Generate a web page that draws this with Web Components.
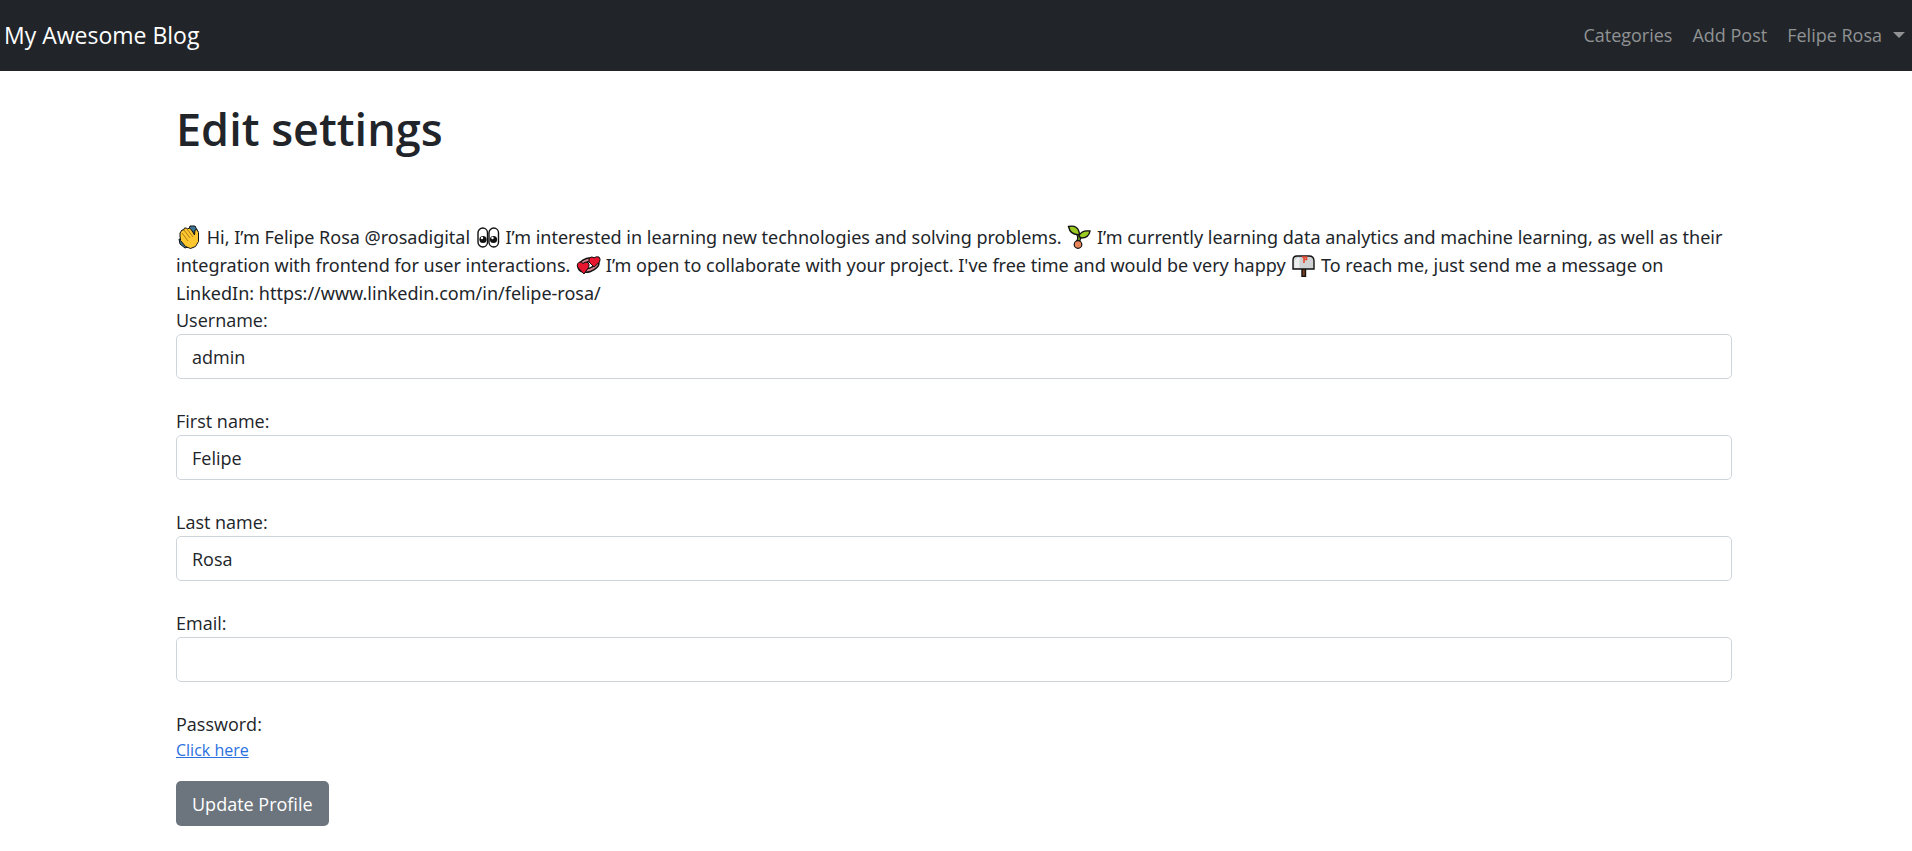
<!DOCTYPE html>
<html lang="en">
<head>
<meta charset="utf-8">
<title>My Awesome Blog</title>
<style>
  body { margin: 0; background: #fff; color: #212529; font: 18px/28px "Open Sans", "Noto Sans", sans-serif; }
</style>
</head>
<body>
<blog-navbar brand="My Awesome Blog">
  <blog-nav-link href="#categories">Categories</blog-nav-link>
  <blog-nav-link href="#add-post">Add Post</blog-nav-link>
  <blog-nav-link href="#profile" dropdown>Felipe Rosa</blog-nav-link>
</blog-navbar>
<settings-page heading="Edit settings">
  <profile-bio slot="bio"><emoji-icon name="wave"></emoji-icon> Hi, I’m Felipe Rosa @rosadigital <emoji-icon name="eyes"></emoji-icon> I’m interested in learning new technologies and solving problems. <emoji-icon name="seedling"></emoji-icon> I’m currently learning data analytics and machine learning, as well as their integration with frontend for user interactions. <emoji-icon name="hearts"></emoji-icon> I’m open to collaborate with your project. I've free time and would be very happy <emoji-icon name="mailbox"></emoji-icon> To reach me, just send me a message on LinkedIn: https://www.linkedin.com/in/felipe-rosa/</profile-bio>
  <text-field label="Username:" value="admin"></text-field>
  <text-field label="First name:" value="Felipe"></text-field>
  <text-field label="Last name:" value="Rosa"></text-field>
  <text-field label="Email:" type="email"></text-field>
  <password-row label="Password:" href="#password">Click here</password-row>
  <submit-button slot="actions">Update Profile</submit-button>
</settings-page>

<script>
const define = (name, html, setup) => customElements.define(name, class extends HTMLElement {
  constructor() {
    super();
    const t = document.createElement('template');
    t.innerHTML = html;
    this.attachShadow({ mode: 'open' }).append(t.content.cloneNode(true));
  }
  connectedCallback() { if (setup) setup(this, s => this.shadowRoot.querySelector(s)); }
});

define('blog-navbar', `
  <style>
    :host { display: block; background: #212529; }
    nav { display: flex; align-items: center; justify-content: space-between; padding: 17px 0 18px 4px; }
    a { color: #fff; font-size: 23px; line-height: 36px; text-decoration: none; }
    div { display: flex; }
  </style>
  <nav><a href="#home"></a><div><slot></slot></div></nav>`,
  (el, q) => { q('a').textContent = el.getAttribute('brand'); });

define('blog-nav-link', `
  <style>
    :host { display: block; }
    a { display: flex; align-items: center; padding: 0 10px; color: #909294; text-decoration: none; white-space: nowrap; }
    i { display: none; margin-left: 11px; border: 6px solid transparent; border-top-color: currentColor; border-bottom: 0; }
    :host([dropdown]) i { display: block; }
    :host([dropdown]) a { padding-right: 7px; }
  </style>
  <a><slot></slot><i></i></a>`,
  (el, q) => { q('a').href = el.getAttribute('href'); });

define('settings-page', `
  <style>
    :host { display: block; padding: 30px 180px 24px 176px; }
    h1 { margin: 0 0 66px; font-size: 45px; line-height: 56px; font-weight: 600; }
    form { display: grid; }
  </style>
  <main><h1></h1><slot name="bio"></slot><form><slot></slot><slot name="actions"></slot></form></main>`,
  (el, q) => { q('h1').textContent = el.getAttribute('heading'); });

define('profile-bio', `
  <style>:host { display: block; font-family: "Noto Sans", "Open Sans", sans-serif; }</style>
  <slot></slot>`);

define('text-field', `
  <style>
    :host { display: block; margin-bottom: 29px; }
    label { display: block; line-height: 27px; }
    input { display: block; box-sizing: border-box; width: 100%; height: 45px; padding: 0 15px; border: 1px solid #ced4da; border-radius: 5px; background: #fff; color: inherit; font: inherit; }
  </style>
  <label for="f"></label><input id="f">`,
  (el, q) => {
    q('label').textContent = el.getAttribute('label');
    q('input').type = el.getAttribute('type') || 'text';
    q('input').value = el.getAttribute('value') || '';
  });

define('password-row', `
  <style>
    :host { display: block; margin-bottom: 19px; }
    div { line-height: 27px; }
    a { display: block; width: fit-content; color: #2a70e0; font-size: 16px; line-height: 24px; }
  </style>
  <div></div><a><slot></slot></a>`,
  (el, q) => {
    q('div').textContent = el.getAttribute('label');
    q('a').href = el.getAttribute('href');
  });

define('submit-button', `
  <style>
    :host { display: block; }
    button { height: 45px; padding: 0 16px; border: 0; border-radius: 5px; background: #6c757d; color: #fff; font: inherit; }
  </style>
  <button type="button"><slot></slot></button>`);

const ICONS = {
  wave: `<path d="M12 4l1-3 5 0 3 6-2 2zM2 14l1 5 5 4 3-1-5-8z" fill="#3a7796" stroke="#111"/>
    <path d="M3 12l0-4 2-3 1.500 0 1-2 2 0 1 1 2-1 2 2 3 5 .500-5 2-.500 1.500 3 0 9-3 5-5 2-5-2-5-6 0-2z" fill="#fcc62f" stroke="#111"/>
    <path d="M5 8l6 8M7 5l6 8M10 4l6 8" fill="none" stroke="#9b6b12" stroke-width=".8"/>`,
  eyes: `<g fill="#fff" stroke="#111" stroke-width="1.400"><rect x="2" y="3" width="9.500" height="19" rx="4.750"/><rect x="13" y="3" width="9.500" height="19" rx="4.750"/></g>
    <g fill="#111"><circle cx="7" cy="14.500" r="3.600"/><circle cx="17.500" cy="14.500" r="3.600"/></g><g fill="#fff"><circle cx="6" cy="13" r="1.200"/><circle cx="16.500" cy="13" r="1.200"/></g>`,
  seedling: `<path d="M11 17C13 13 13 10 9 7M12 13q1-3 5-4" fill="none" stroke="#111" stroke-width="4"/><path d="M11 17C13 13 13 10 9 7M12 13q1-3 5-4" fill="none" stroke="#6d9824" stroke-width="1.800"/>
    <path d="M1.500 1.500q10-2 11 8-9 1-11-8zM12 11q2-6 11-5-1 7-9 7z" fill="#9bcb22" stroke="#111" stroke-width="1.400"/>
    <circle cx="11" cy="19.500" r="3.800" fill="#e9855b" stroke="#111" stroke-width="1.200"/>`,
  hearts: `<g fill="none" transform="rotate(-18 12.500 12)"><ellipse cx="12.500" cy="12" rx="9" ry="5" stroke="#111" stroke-width="5"/><ellipse cx="12.500" cy="12" rx="9" ry="5" stroke="#d3838c" stroke-width="2"/></g>
    <path d="M8 21L1.500 14q-1-4 2.500-5 2 0 3 1.500 2-2 5-1 2 2 .5 5zM18 14l-5-5q-1-4 2-5 2 0 3 1 2-2 5-1 2 2 .5 5z" fill="#e8152f" stroke="#111"/>`,
  mailbox: `<path d="M11 15h3.500v8.500h-3.500z" fill="#7d3f22" stroke="#111" stroke-width="1.400"/>
    <path d="M2 16V7q0-4 4-4h12q5 0 5 5v8z" fill="#cfd1d3" stroke="#111" stroke-width="1.400"/><path d="M3.500 8q2-4 5-3v10h-5z" fill="#eeefef"/>
    <path d="M13 10V4M11 4h4.500v2.500h-2" fill="none" stroke="#e6482e" stroke-width="1.600"/>`
};
define('emoji-icon', `
  <style>
    :host { display: inline-block; width: 26px; height: 24px; vertical-align: -5px; line-height: 0; }
    svg { width: 26px; height: 24px; }
  </style>
  <svg viewBox="-1 0 26 24" aria-hidden="true"></svg>`,
  (el, q) => { q('svg').innerHTML = ICONS[el.getAttribute('name')]; });
</script>
</body>
</html>
